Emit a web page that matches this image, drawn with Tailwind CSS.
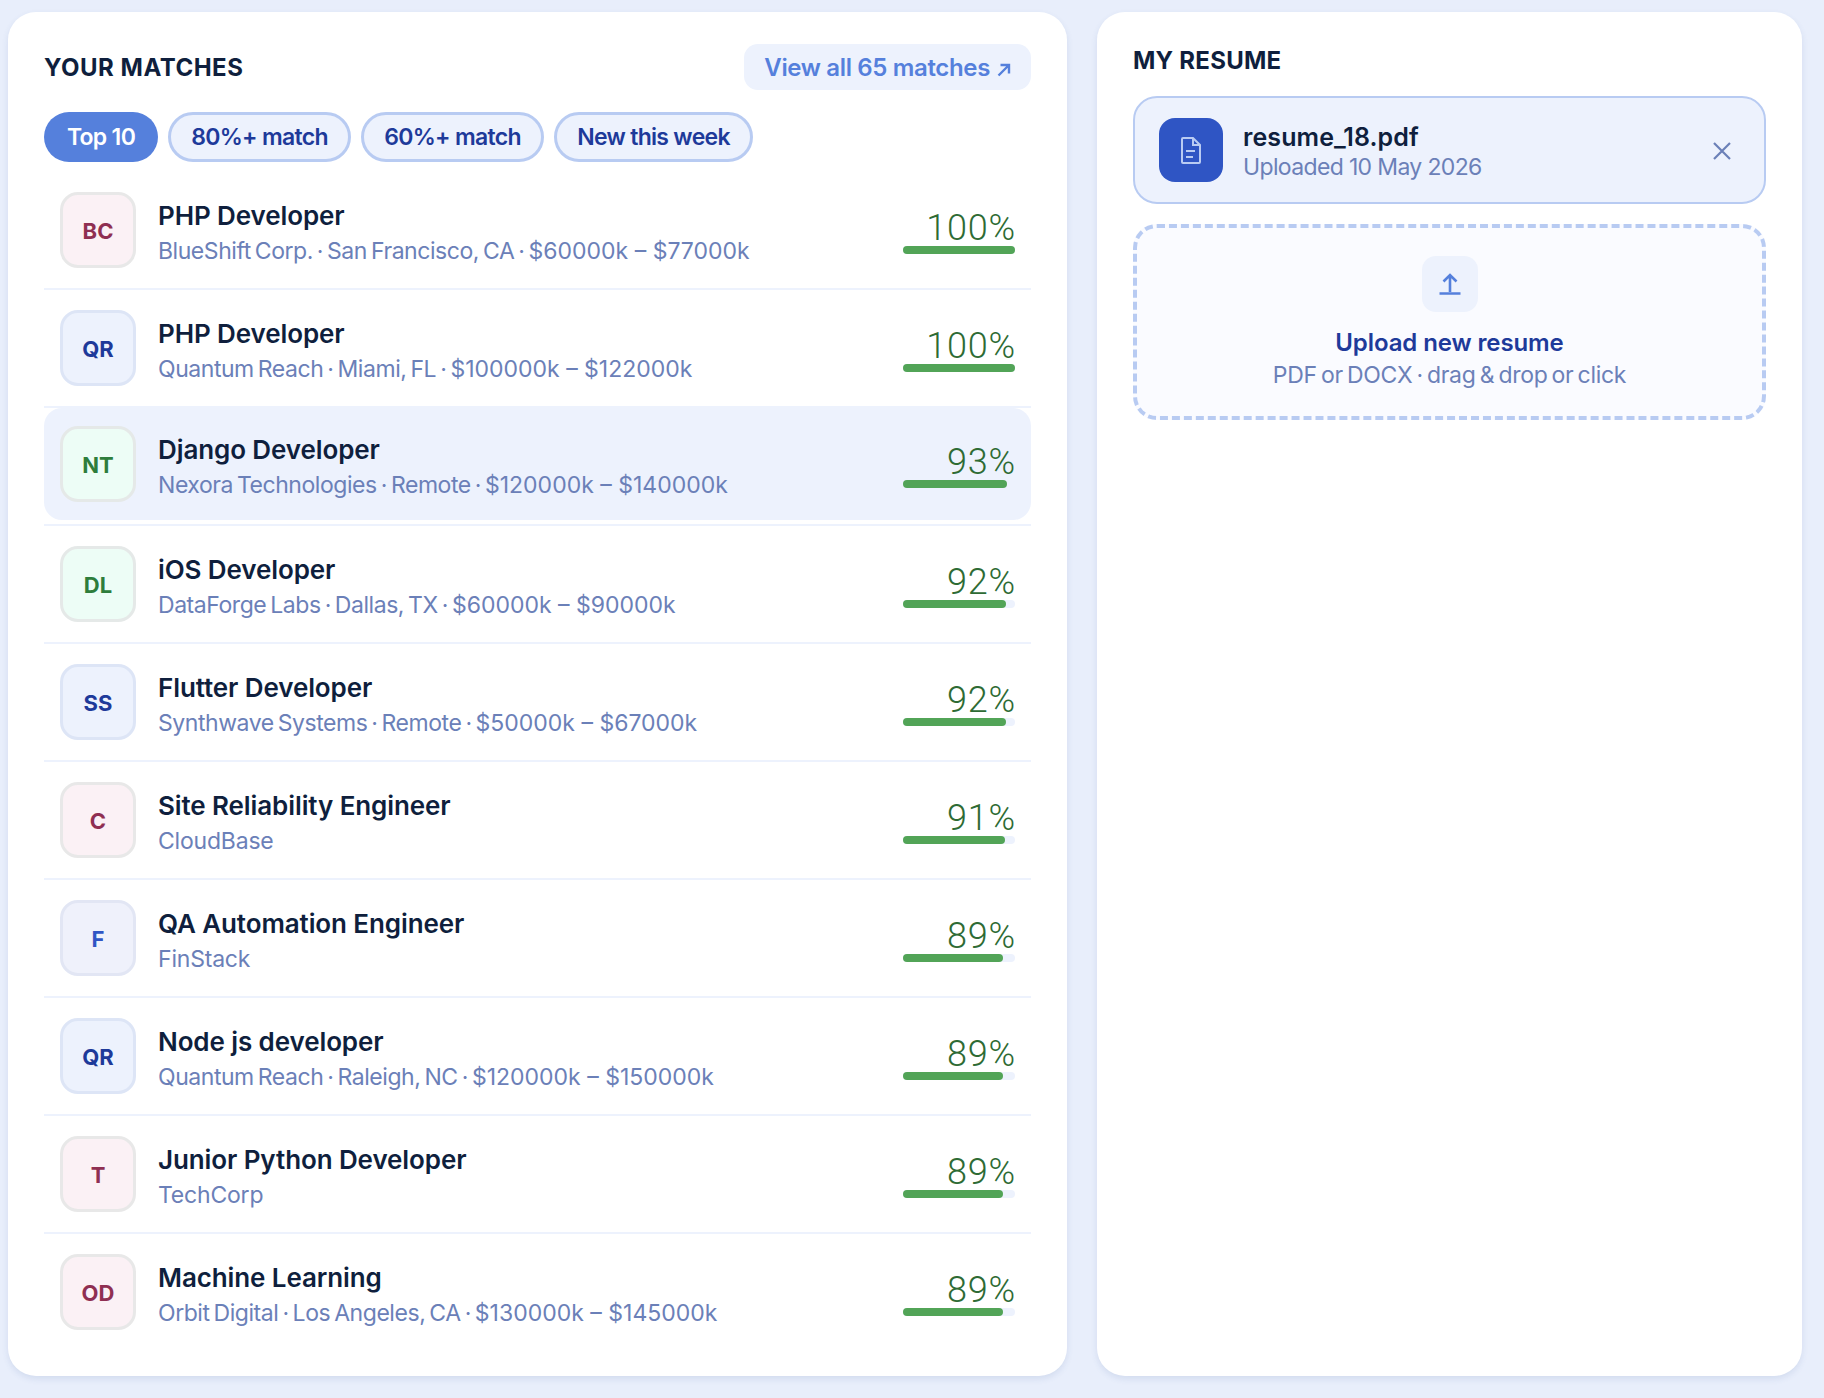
<!DOCTYPE html>
<html lang="en">
  <head>
    <meta charset="UTF-8">
    <meta name="viewport" content="width=device-width, initial-scale=1.0">
    <script src="https://cdn.jsdelivr.net/npm/@tailwindcss/browser@4"></script>
    <title>Matches</title>
  </head>
  <body class="h-screen overflow-hidden bg-[#e8eefb] font-['Inter',sans-serif]">
    <div class="flex items-start gap-[30px] pl-2 pt-3">

      <!-- Matches -->
      <div class="w-[1059px] h-[1364px] shrink-0 rounded-[28px] bg-white px-9 pt-8 shadow-[0_3px_6px_rgba(60,90,160,0.12)]">
        <div class="flex items-center justify-between h-[46px]">
          <h2 class="pt-[2px] text-[24px] font-bold tracking-[0.5px] text-[#0f1f3d]">YOUR MATCHES</h2>
          <a class="flex items-center gap-[7px] h-[46px] pt-px px-5 rounded-[14px] bg-[#edf2fd] text-[24px] font-semibold tracking-[-0.35px] text-[#5580dc]">
            View all 65 matches
            <svg width="14" height="14" viewBox="0 0 14 14" fill="none" stroke="#5580dc" stroke-width="2.4" class="mt-1"><path d="M1.5 12.5 12 2M3.5 2H12V10.5"/></svg>
          </a>
        </div>
        <div class="flex gap-[10px] mt-[22px]">
          <button class="h-[50px] w-[114px] pt-px rounded-full bg-[#5580dc] text-[23px] font-semibold tracking-[-0.7px] text-white">Top 10</button>
          <button class="h-[50px] w-[183px] pt-px rounded-full border-[3px] border-[#b8cbf2] bg-[#edf2fd] text-[23px] font-semibold tracking-[-0.7px] text-[#1e3a9a]">80%+ match</button>
          <button class="h-[50px] w-[183px] pt-px rounded-full border-[3px] border-[#b8cbf2] bg-[#edf2fd] text-[23px] font-semibold tracking-[-0.7px] text-[#1e3a9a]">60%+ match</button>
          <button class="h-[50px] w-[199px] pt-px rounded-full border-[3px] border-[#b8cbf2] bg-[#edf2fd] text-[23px] font-semibold tracking-[-0.7px] text-[#1e3a9a]">New this week</button>
        </div>

        <div class="mt-[10px]">
          <div class="border-b-2 border-[#edf2fd]">
            <div class="flex items-center gap-[22px] px-4 py-5">
              <div class="w-[76px] h-[76px] shrink-0 flex items-center justify-center pt-[3px] rounded-[18px] border-[3px] border-[#e8e8e8] bg-[#fbf1f5] text-[22px] font-bold text-[#8f2f52]">BC</div>
              <div class="flex-1 min-w-0 pt-[5px]">
                <p class="text-[26px] leading-[34px] font-semibold tracking-[-0.1px] text-[#0f1f3d]">PHP Developer</p>
                <p class="mt-[2px] text-[23px] leading-[32px] tracking-[-0.45px] [word-spacing:-2px] text-[#6b80b8]">BlueShift Corp. · San Francisco, CA · <span class="tracking-[0px] [word-spacing:0px]">$60000k – $77000k</span></p>
              </div>
              <div class="w-[112px] shrink-0">
                <p class="h-10 -mr-px text-right text-[36px] leading-[44px] tracking-[0.8px] font-light text-[#2e6b34] font-['Roboto',sans-serif]">100%</p>
                <div class="h-2 rounded-full bg-[#edf2fd]"><div class="h-full w-full rounded-full bg-[#52a457]"></div></div>
              </div>
            </div>
          </div>
          <div class="border-b-2 border-[#edf2fd]">
            <div class="flex items-center gap-[22px] px-4 py-5">
              <div class="w-[76px] h-[76px] shrink-0 flex items-center justify-center pt-[3px] rounded-[18px] border-[3px] border-[#dde5f6] bg-[#edf2fd] text-[22px] font-bold text-[#1e3a9a]">QR</div>
              <div class="flex-1 min-w-0 pt-[5px]">
                <p class="text-[26px] leading-[34px] font-semibold tracking-[-0.1px] text-[#0f1f3d]">PHP Developer</p>
                <p class="mt-[2px] text-[23px] leading-[32px] tracking-[-0.45px] [word-spacing:-2px] text-[#6b80b8]">Quantum Reach · Miami, FL · <span class="tracking-[0px] [word-spacing:0px]">$100000k – $122000k</span></p>
              </div>
              <div class="w-[112px] shrink-0">
                <p class="h-10 -mr-px text-right text-[36px] leading-[44px] tracking-[0.8px] font-light text-[#2e6b34] font-['Roboto',sans-serif]">100%</p>
                <div class="h-2 rounded-full bg-[#edf2fd]"><div class="h-full w-full rounded-full bg-[#52a457]"></div></div>
              </div>
            </div>
          </div>
          <!-- selected row -->
          <div class="border-b-2 border-[#edf2fd]">
            <div class="flex items-center gap-[22px] px-4 py-[18px] mb-1 rounded-[18px] bg-[#edf2fd]">
              <div class="w-[76px] h-[76px] shrink-0 flex items-center justify-center pt-[3px] rounded-[18px] border-[3px] border-[#e5e9e8] bg-[#edfdf6] text-[22px] font-bold text-[#2e7d3c]">NT</div>
              <div class="flex-1 min-w-0 pt-[5px]">
                <p class="text-[26px] leading-[34px] font-semibold tracking-[-0.1px] text-[#0f1f3d]">Django Developer</p>
                <p class="mt-[2px] text-[23px] leading-[32px] tracking-[-0.45px] [word-spacing:-2px] text-[#6b80b8]">Nexora Technologies · Remote · <span class="tracking-[0px] [word-spacing:0px]">$120000k – $140000k</span></p>
              </div>
              <div class="w-[112px] shrink-0">
                <p class="h-10 -mr-px text-right text-[36px] leading-[44px] tracking-[0.8px] font-light text-[#2e6b34] font-['Roboto',sans-serif]">93%</p>
                <div class="h-2 rounded-full bg-[#edf2fd]"><div class="h-full w-[93%] rounded-full bg-[#52a457]"></div></div>
              </div>
            </div>
          </div>
          <div class="border-b-2 border-[#edf2fd]">
            <div class="flex items-center gap-[22px] px-4 py-5">
              <div class="w-[76px] h-[76px] shrink-0 flex items-center justify-center pt-[3px] rounded-[18px] border-[3px] border-[#e5e9e8] bg-[#edfdf6] text-[22px] font-bold text-[#2e7d3c]">DL</div>
              <div class="flex-1 min-w-0 pt-[5px]">
                <p class="text-[26px] leading-[34px] font-semibold tracking-[-0.1px] text-[#0f1f3d]">iOS Developer</p>
                <p class="mt-[2px] text-[23px] leading-[32px] tracking-[-0.45px] [word-spacing:-2px] text-[#6b80b8]">DataForge Labs · Dallas, TX · <span class="tracking-[0px] [word-spacing:0px]">$60000k – $90000k</span></p>
              </div>
              <div class="w-[112px] shrink-0">
                <p class="h-10 -mr-px text-right text-[36px] leading-[44px] tracking-[0.8px] font-light text-[#2e6b34] font-['Roboto',sans-serif]">92%</p>
                <div class="h-2 rounded-full bg-[#edf2fd]"><div class="h-full w-[92%] rounded-full bg-[#52a457]"></div></div>
              </div>
            </div>
          </div>
          <div class="border-b-2 border-[#edf2fd]">
            <div class="flex items-center gap-[22px] px-4 py-5">
              <div class="w-[76px] h-[76px] shrink-0 flex items-center justify-center pt-[3px] rounded-[18px] border-[3px] border-[#dde5f6] bg-[#edf2fd] text-[22px] font-bold text-[#1e3a9a]">SS</div>
              <div class="flex-1 min-w-0 pt-[5px]">
                <p class="text-[26px] leading-[34px] font-semibold tracking-[-0.1px] text-[#0f1f3d]">Flutter Developer</p>
                <p class="mt-[2px] text-[23px] leading-[32px] tracking-[-0.45px] [word-spacing:-2px] text-[#6b80b8]">Synthwave Systems · Remote · <span class="tracking-[0px] [word-spacing:0px]">$50000k – $67000k</span></p>
              </div>
              <div class="w-[112px] shrink-0">
                <p class="h-10 -mr-px text-right text-[36px] leading-[44px] tracking-[0.8px] font-light text-[#2e6b34] font-['Roboto',sans-serif]">92%</p>
                <div class="h-2 rounded-full bg-[#edf2fd]"><div class="h-full w-[92%] rounded-full bg-[#52a457]"></div></div>
              </div>
            </div>
          </div>
          <div class="border-b-2 border-[#edf2fd]">
            <div class="flex items-center gap-[22px] px-4 py-5">
              <div class="w-[76px] h-[76px] shrink-0 flex items-center justify-center pt-[3px] rounded-[18px] border-[3px] border-[#e8e8e8] bg-[#fbf1f5] text-[22px] font-bold text-[#8f2f52]">C</div>
              <div class="flex-1 min-w-0 pt-[5px]">
                <p class="text-[26px] leading-[34px] font-semibold tracking-[-0.1px] text-[#0f1f3d]">Site Reliability Engineer</p>
                <p class="mt-[2px] text-[23px] leading-[32px] tracking-[-0.2px] text-[#6b80b8]">CloudBase</p>
              </div>
              <div class="w-[112px] shrink-0">
                <p class="h-10 -mr-px text-right text-[36px] leading-[44px] tracking-[0.8px] font-light text-[#2e6b34] font-['Roboto',sans-serif]">91%</p>
                <div class="h-2 rounded-full bg-[#edf2fd]"><div class="h-full w-[91%] rounded-full bg-[#52a457]"></div></div>
              </div>
            </div>
          </div>
          <div class="border-b-2 border-[#edf2fd]">
            <div class="flex items-center gap-[22px] px-4 py-5">
              <div class="w-[76px] h-[76px] shrink-0 flex items-center justify-center pt-[3px] rounded-[18px] border-[3px] border-[#e2e6f4] bg-[#eff1fb] text-[22px] font-bold text-[#2f55c4]">F</div>
              <div class="flex-1 min-w-0 pt-[5px]">
                <p class="text-[26px] leading-[34px] font-semibold tracking-[-0.1px] text-[#0f1f3d]">QA Automation Engineer</p>
                <p class="mt-[2px] text-[23px] leading-[32px] tracking-[-0.2px] text-[#6b80b8]">FinStack</p>
              </div>
              <div class="w-[112px] shrink-0">
                <p class="h-10 -mr-px text-right text-[36px] leading-[44px] tracking-[0.8px] font-light text-[#2e6b34] font-['Roboto',sans-serif]">89%</p>
                <div class="h-2 rounded-full bg-[#edf2fd]"><div class="h-full w-[89%] rounded-full bg-[#52a457]"></div></div>
              </div>
            </div>
          </div>
          <div class="border-b-2 border-[#edf2fd]">
            <div class="flex items-center gap-[22px] px-4 py-5">
              <div class="w-[76px] h-[76px] shrink-0 flex items-center justify-center pt-[3px] rounded-[18px] border-[3px] border-[#dde5f6] bg-[#edf2fd] text-[22px] font-bold text-[#1e3a9a]">QR</div>
              <div class="flex-1 min-w-0 pt-[5px]">
                <p class="text-[26px] leading-[34px] font-semibold tracking-[-0.1px] text-[#0f1f3d]">Node js developer</p>
                <p class="mt-[2px] text-[23px] leading-[32px] tracking-[-0.45px] [word-spacing:-2px] text-[#6b80b8]">Quantum Reach · Raleigh, NC · <span class="tracking-[0px] [word-spacing:0px]">$120000k – $150000k</span></p>
              </div>
              <div class="w-[112px] shrink-0">
                <p class="h-10 -mr-px text-right text-[36px] leading-[44px] tracking-[0.8px] font-light text-[#2e6b34] font-['Roboto',sans-serif]">89%</p>
                <div class="h-2 rounded-full bg-[#edf2fd]"><div class="h-full w-[89%] rounded-full bg-[#52a457]"></div></div>
              </div>
            </div>
          </div>
          <div class="border-b-2 border-[#edf2fd]">
            <div class="flex items-center gap-[22px] px-4 py-5">
              <div class="w-[76px] h-[76px] shrink-0 flex items-center justify-center pt-[3px] rounded-[18px] border-[3px] border-[#e8e8e8] bg-[#fbf1f5] text-[22px] font-bold text-[#8f2f52]">T</div>
              <div class="flex-1 min-w-0 pt-[5px]">
                <p class="text-[26px] leading-[34px] font-semibold tracking-[-0.1px] text-[#0f1f3d]">Junior Python Developer</p>
                <p class="mt-[2px] text-[23px] leading-[32px] tracking-[-0.2px] text-[#6b80b8]">TechCorp</p>
              </div>
              <div class="w-[112px] shrink-0">
                <p class="h-10 -mr-px text-right text-[36px] leading-[44px] tracking-[0.8px] font-light text-[#2e6b34] font-['Roboto',sans-serif]">89%</p>
                <div class="h-2 rounded-full bg-[#edf2fd]"><div class="h-full w-[89%] rounded-full bg-[#52a457]"></div></div>
              </div>
            </div>
          </div>
          <div>
            <div class="flex items-center gap-[22px] px-4 py-5">
              <div class="w-[76px] h-[76px] shrink-0 flex items-center justify-center pt-[3px] rounded-[18px] border-[3px] border-[#e8e8e8] bg-[#fbf1f5] text-[22px] font-bold text-[#8f2f52]">OD</div>
              <div class="flex-1 min-w-0 pt-[5px]">
                <p class="text-[26px] leading-[34px] font-semibold tracking-[-0.1px] text-[#0f1f3d]">Machine Learning</p>
                <p class="mt-[2px] text-[23px] leading-[32px] tracking-[-0.45px] [word-spacing:-2px] text-[#6b80b8]">Orbit Digital · Los Angeles, CA · <span class="tracking-[0px] [word-spacing:0px]">$130000k – $145000k</span></p>
              </div>
              <div class="w-[112px] shrink-0">
                <p class="h-10 -mr-px text-right text-[36px] leading-[44px] tracking-[0.8px] font-light text-[#2e6b34] font-['Roboto',sans-serif]">89%</p>
                <div class="h-2 rounded-full bg-[#edf2fd]"><div class="h-full w-[89%] rounded-full bg-[#52a457]"></div></div>
              </div>
            </div>
          </div>
        </div>
      </div>

      <!-- Resume -->
      <div class="w-[705px] h-[1364px] shrink-0 rounded-[28px] bg-white px-9 pt-8 shadow-[0_3px_6px_rgba(60,90,160,0.12)]">
        <h2 class="pt-px h-8 text-[24px] leading-[32px] font-bold tracking-[0.25px] text-[#0f1f3d]">MY RESUME</h2>
        <div class="flex items-center h-[108px] mt-5 pl-6 pr-[32px] rounded-[24px] border-2 border-[#b8cbf2] bg-[#edf2fd]">
          <div class="w-16 h-16 shrink-0 flex items-center justify-center rounded-2xl bg-[#2f55c4]">
            <svg width="22" height="29" viewBox="0 0 22 29" fill="none" stroke="#b9cbf3" stroke-width="2"><path d="M3 2H13L20 9V26a1 1 0 0 1-1 1H3a1 1 0 0 1-1-1V3a1 1 0 0 1 1-1ZM13 2V9H20M6 15H15M6 21H13"/></svg>
          </div>
          <div class="flex-1 ml-5 pt-px">
            <p class="pt-[2px] text-[25px] leading-[32px] font-semibold tracking-[0.1px] text-[#0f1f3d]">resume_18.pdf</p>
            <p class="text-[23px] leading-[29px] tracking-[-0.65px] text-[#6b80b8]">Uploaded 10 May 2026</p>
          </div>
          <svg width="20" height="20" viewBox="0 0 20 20" fill="none" stroke="#6b80b8" stroke-width="2.2" class="mt-px"><path d="M2 2 18 18M18 2 2 18"/></svg>
        </div>
        <div class="flex flex-col items-center h-[196px] mt-5 pt-7 rounded-[24px] border-4 border-dashed border-[#b8cbf2] bg-[#fafbff]">
          <div class="w-14 h-14 flex items-center justify-center rounded-[14px] bg-[#edf2fd]">
            <svg width="24" height="22" viewBox="0 0 24 22" fill="none" stroke="#5580dc" stroke-width="2.6"><path d="M12 19V2M5.5 8.5 12 2l6.5 6.5M1.5 20.5H22.5"/></svg>
          </div>
          <p class="mt-[15px] text-[24px] leading-[32px] font-semibold tracking-[-0.1px] text-[#1e3a9a]">Upload new resume</p>
          <p class="text-[23px] leading-[32px] tracking-[-0.3px] [word-spacing:-2px] text-[#6b80b8]">PDF or DOCX · drag &amp; drop or click</p>
        </div>
      </div>

    </div>
  </body>
</html>
